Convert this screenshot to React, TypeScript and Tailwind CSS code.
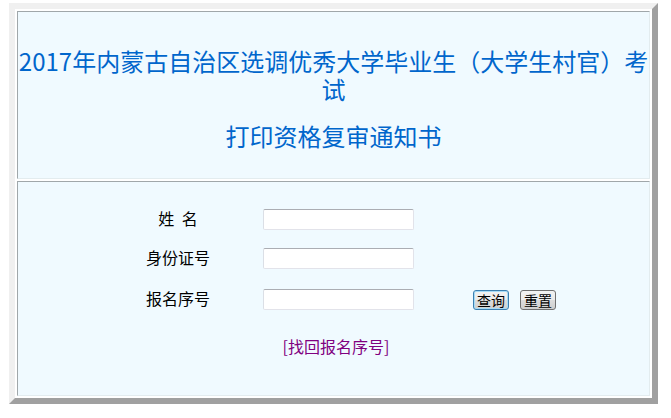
const labelCls = "w-[120px] pb-[3px] text-center text-[16px] leading-[18px] text-black [word-spacing:4px]";
const inputCls =
  "ml-[25px] w-[151px] h-[21px] rounded-[2px] border border-[#e2e3ea] border-t-[#abadb3] border-l-[#dbdfe6] bg-white outline-none";
const btnCls =
  "w-[36px] h-[20px] rounded-[3px] border text-[14px] leading-none text-black bg-[linear-gradient(#f2f2f2_0%,#ebebeb_50%,#dddddd_50%,#cfcfcf_100%)]";

const App = () => {
  return (
    <div className="w-[671px] h-[418px] bg-white pt-[3px] pl-[9px] font-['Noto_Sans_CJK_SC',sans-serif]">
      <div className="w-[649px] h-[401px] border-[6px] border-t-[#f0f0f0] border-l-[#f0f0f0] border-r-[#a0a0a0] border-b-[#a0a0a0] bg-white p-[2px] flex flex-col gap-[2px]">
        {/* title cell */}
        <div className="h-[168px] border border-t-[#a0a7aa] border-l-[#a0a7aa] border-r-[#e3ecef] border-b-[#e3ecef] bg-[#f0faff] pt-[35px] text-center text-[24px] leading-[28px] text-[#0066cc]">
          <div className="whitespace-nowrap">2017年内蒙古自治区选调优秀大学毕业生（大学生村官）考</div>
          <div>试</div>
          <div className="mt-[19px]">打印资格复审通知书</div>
        </div>

        {/* form cell */}
        <div className="h-[215px] border border-t-[#a0a7aa] border-l-[#a0a7aa] border-r-[#e3ecef] border-b-[#e3ecef] bg-[#f0faff] pt-[27px]">
          <div className="pl-[100px] flex flex-col">
            <div className="flex items-center h-[21px]">
              <div className={labelCls}>姓 名</div>
              <input className={inputCls} />
            </div>
            <div className="flex items-center h-[21px] mt-[18px]">
              <div className={labelCls}>身份证号</div>
              <input className={inputCls} />
            </div>
            <div className="flex items-center h-[21px] mt-[20px]">
              <div className={labelCls}>报名序号</div>
              <input className={inputCls} />
              <button className={`${btnCls} ml-[59px] border-[#3c7fb1] shadow-[inset_0_0_0_1px_#a6dcf7]`}>查询</button>
              <button className={`${btnCls} ml-[11px] border-[#707070]`}>重置</button>
            </div>
          </div>
          <div className="mt-[27px] pl-[5px] text-center text-[16px] leading-[18px]">
            <a href="#" className="text-[#800080]">[找回报名序号]</a>
          </div>
        </div>
      </div>
    </div>
  );
};

export default App;
